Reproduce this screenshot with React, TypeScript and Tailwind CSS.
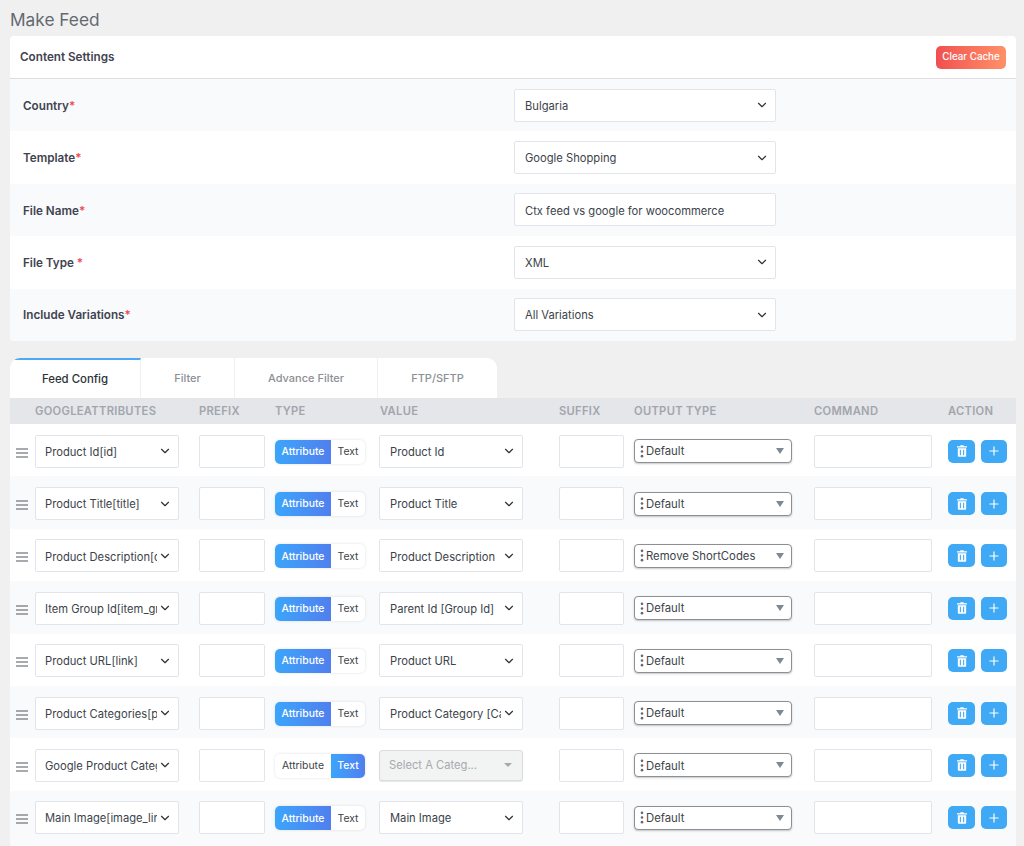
import { ChevronDown, Plus } from 'lucide-react';

const settings = [
  { label: 'Country', star: '*', value: 'Bulgaria', kind: 'select' },
  { label: 'Template', star: '*', value: 'Google Shopping', kind: 'select' },
  { label: 'File Name', star: '*', value: 'Ctx feed vs google for woocommerce', kind: 'input' },
  { label: 'File Type ', star: '*', value: 'XML', kind: 'select' },
  { label: 'Include Variations', star: '*', value: 'All Variations', kind: 'select' },
];

const rows = [
  { attr: 'Product Id[id]', value: 'Product Id', output: 'Default' },
  { attr: 'Product Title[title]', value: 'Product Title', output: 'Default' },
  { attr: 'Product Description[description]', value: 'Product Description', output: 'Remove ShortCodes' },
  { attr: 'Item Group Id[item_group_id]', value: 'Parent Id [Group Id]', output: 'Default' },
  { attr: 'Product URL[link]', value: 'Product URL', output: 'Default' },
  { attr: 'Product Categories[product_type]', value: 'Product Category [Category]', output: 'Default' },
  { attr: 'Google Product Category[google]', value: '', output: 'Default', text: true },
  { attr: 'Main Image[image_link]', value: 'Main Image', output: 'Default' },
];

const tabs = [
  { label: 'Feed Config', w: 'w-[131px]', on: true },
  { label: 'Filter', w: 'w-[94px]', on: false },
  { label: 'Advance Filter', w: 'w-[143px]', on: false },
  { label: 'FTP/SFTP', w: 'w-[119px]', on: false },
];

const SelectBox = ({ value, className }: { value: string; className: string }) => (
  <div className={`flex h-[33px] items-center rounded-[2px] border border-[#e2e4e9] bg-white pr-[6px] text-[11.2px] text-[#3c434a] ${className}`}>
    <span className="min-w-0 flex-1 overflow-hidden pt-[2px] whitespace-nowrap">{value}</span>
    <ChevronDown className="ml-[1px] h-[14px] w-[14px] shrink-0 text-[#2c3338]" strokeWidth={2} />
  </div>
);

const EmptyInput = ({ className }: { className: string }) => (
  <div className={`h-[33px] rounded-[2px] border border-[#e2e4e9] bg-white ${className}`} />
);

const Handle = () => (
  <svg viewBox="0 0 12 10" className="mt-[3px] h-[10px] w-[12px] shrink-0 text-[#50575e]">
    <path d="M0 1h12M0 5h12M0 9h12" stroke="currentColor" strokeWidth="1.1" />
  </svg>
);

const TrashIcon = () => (
  <svg viewBox="0 0 12 14" className="h-[12px] w-[10px]" fill="white">
    <path d="M4.2 0h3.6l.5 1.2H12v1.5H0V1.2h3.7z" />
    <path d="M1 3.6h10V13a1 1 0 0 1-1 1H2a1 1 0 0 1-1-1zM3.4 5.4v6.6h1.3V5.4zm3.9 0v6.6h1.3V5.4z" fillRule="evenodd" />
  </svg>
);

const TypeToggle = ({ text }: { text?: boolean }) => (
  <div className="mt-[1px] ml-[10px] flex h-[24px] w-[90px] overflow-hidden rounded-[5px] bg-white text-[10.4px] shadow-[0_0_3px_rgba(0,0,0,0.12)]">
    <div className={`flex w-[56px] items-center justify-center ${text ? 'text-[#3c434a]' : 'bg-gradient-to-r from-[#3aa5fb] to-[#4f7fee] font-medium text-white'}`}>Attribute</div>
    <div className={`flex w-[34px] items-center justify-center ${text ? 'bg-gradient-to-r from-[#3aa5fb] to-[#4f7fee] font-medium text-white' : 'text-[#3c434a]'}`}>Text</div>
  </div>
);

const OutputSelect = ({ value }: { value: string }) => (
  <div className="ml-[10px] flex h-[24px] w-[158px] items-center rounded-[4px] border border-[#8c8f94] bg-white pl-[5px] pr-[7px] text-[11.3px] text-[#3c434a] shadow-[0_1px_2px_rgba(0,0,0,0.22)]">
    <svg viewBox="0 0 4 14" className="mr-[2px] h-[13px] w-[4px] shrink-0 text-[#646970]">
      <circle cx="2" cy="2" r="1.4" fill="currentColor" />
      <circle cx="2" cy="7" r="1.4" fill="currentColor" />
      <circle cx="2" cy="12" r="1.4" fill="currentColor" />
    </svg>
    <span className="flex-1 pt-[1px]">{value}</span>
    <span className="h-0 w-0 border-x-[4px] border-t-[6px] border-x-transparent border-t-[#7e8993]" />
  </div>
);

const DisabledSelect = () => (
  <div className="flex h-[31px] w-[144px] items-center rounded-[3px] border border-[#dcdcde] bg-[#f2f3f3] pl-[9px] pr-[10px] text-[11.2px] text-[#a7aaad] shadow-[0_1px_1px_rgba(0,0,0,0.1)]">
    <span className="flex-1">Select A Categ...</span>
    <span className="h-0 w-0 border-x-[4px] border-t-[4px] border-x-transparent border-t-[#a7aaad]" />
  </div>
);

export default function App() {
  return (
    <div className="h-[846px] overflow-hidden bg-[#f0f0f1] pl-[10px] font-['Inter','Liberation_Sans',sans-serif]">
      <h1 className="h-[36px] pt-[9px] text-[17.3px] leading-[22px] font-normal text-[#646970]">Make Feed</h1>

      {/* Content Settings */}
      <div className="w-[1006px] overflow-hidden rounded-[4px] bg-white">
        <div className="flex h-[43px] items-center justify-between border-b border-[#dcdee2] pr-[10px] pl-[10px]">
          <span className="pt-[2px] text-[11.7px] font-semibold text-[#3f4350]">Content Settings</span>
          <button className="h-[23px] w-[70px] rounded-[5px] bg-gradient-to-r from-[#f04f50] to-[#ff9069] pt-[1px] text-[9.8px] font-medium text-white">Clear Cache</button>
        </div>
        {settings.map((s, i) => (
          <div key={s.label} className={`flex h-[52.4px] items-center ${i % 2 === 0 ? 'bg-[#f8fafb]' : 'bg-white'}`}>
            <div className="w-[504px] pt-[3px] pl-[13px] text-[11.7px] font-semibold text-[#3f4350]">
              {s.label}<span className="text-[#f0424e]">{s.star}</span>
            </div>
            {s.kind === 'select' ? (
              <SelectBox value={s.value} className="w-[262px] pl-[10px]" />
            ) : (
              <div className="flex h-[33px] w-[262px] items-center rounded-[2px] border border-[#e2e4e9] bg-white pt-[2px] pl-[10px] text-[11.2px] text-[#3c434a]">{s.value}</div>
            )}
          </div>
        ))}
      </div>

      {/* Tabs */}
      <div className="mt-[17px] flex h-[40px] w-[487px] overflow-hidden rounded-t-[10px] bg-white">
        {tabs.map((t) => (
          <div
            key={t.label}
            className={`flex items-center justify-center border-r border-[#f0f0f1] pt-[1px] font-medium last:border-r-0 ${t.w} ${t.on ? 'border-t-2 border-t-[#4ea8f5] text-[11.4px] text-[#2c3338]' : 'text-[11px] text-[#8c8f94]'}`}
          >
            {t.label}
          </div>
        ))}
      </div>

      {/* Feed table */}
      <div className="w-[1006px] bg-[#f8fafb]">
        <div className="flex h-[26px] items-center bg-[#e4e6ea] text-[11.2px] font-semibold tracking-[0.3px] text-[#a2a5ab]">
          <span className="ml-[25px] w-[164px]">GOOGLEATTRIBUTES</span>
          <span className="w-[76px]">PREFIX</span>
          <span className="w-[105px]">TYPE</span>
          <span className="w-[179px]">VALUE</span>
          <span className="w-[75px]">SUFFIX</span>
          <span className="w-[180px]">OUTPUT TYPE</span>
          <span className="w-[134px]">COMMAND</span>
          <span>ACTION</span>
        </div>
        {rows.map((r, i) => (
          <div key={r.attr} className={`flex h-[52.4px] items-center pt-[2px] ${i % 2 === 0 ? 'bg-white' : 'bg-[#f8fafb]'}`}>
            <div className="flex w-[25px] justify-end pr-[7px]"><Handle /></div>
            <SelectBox value={r.attr} className="w-[144px] shrink-0 pl-[9px]" />
            <EmptyInput className="ml-[20px] w-[66px] shrink-0" />
            <TypeToggle text={r.text} />
            <div className="ml-[14px] shrink-0">
              {r.text ? <DisabledSelect /> : <SelectBox value={r.value} className="w-[144px] pl-[10px]" />}
            </div>
            <EmptyInput className="ml-[36px] w-[65px] shrink-0" />
            <OutputSelect value={r.output} />
            <EmptyInput className="ml-[22px] w-[118px] shrink-0" />
            <button className="ml-[16px] flex h-[23px] w-[27px] items-center justify-center rounded-[5px] bg-[#3fa9f5]">
              <TrashIcon />
            </button>
            <button className="ml-[6px] flex h-[23px] w-[26px] items-center justify-center rounded-[5px] bg-[#3fa9f5] text-white">
              <Plus className="h-[14px] w-[14px]" strokeWidth={2} />
            </button>
          </div>
        ))}
        <div className="h-[6px]" />
      </div>
    </div>
  );
}
